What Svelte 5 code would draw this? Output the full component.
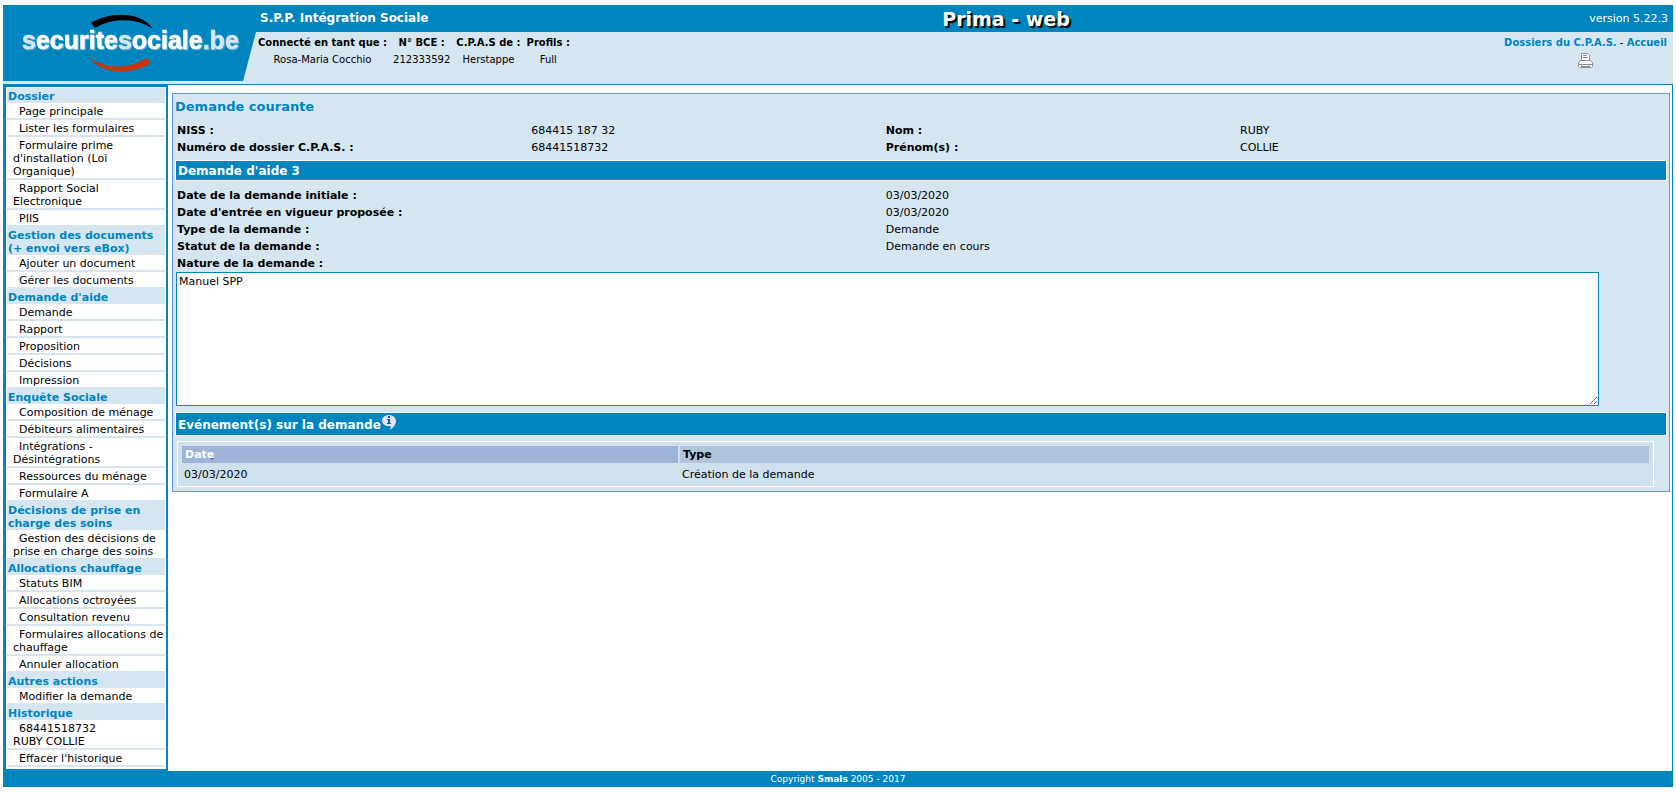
<script>
  const session = [
    { label: 'Connecté en tant que :', value: 'Rosa-Maria Cocchio' },
    { label: 'N° BCE :', value: '212333592' },
    { label: 'C.P.A.S de :', value: 'Herstappe' },
    { label: 'Profils :', value: 'Full' }
  ];

  const menu = [
    {
      title: 'Dossier',
      items: [
        'Page principale',
        'Lister les formulaires',
        "Formulaire prime d'installation (Loi Organique)",
        'Rapport Social Electronique',
        'PIIS'
      ]
    },
    { title: 'Gestion des documents (+ envoi vers eBox)', items: ['Ajouter un document', 'Gérer les documents'] },
    { title: "Demande d'aide", items: ['Demande', 'Rapport', 'Proposition', 'Décisions', 'Impression'] },
    {
      title: 'Enquête Sociale',
      items: [
        'Composition de ménage',
        'Débiteurs alimentaires',
        'Intégrations - Désintégrations',
        'Ressources du ménage',
        'Formulaire A'
      ]
    },
    { title: 'Décisions de prise en charge des soins', items: ['Gestion des décisions de prise en charge des soins'] },
    {
      title: 'Allocations chauffage',
      items: [
        'Statuts BIM',
        'Allocations octroyées',
        'Consultation revenu',
        'Formulaires allocations de chauffage',
        'Annuler allocation'
      ]
    },
    { title: 'Autres actions', items: ['Modifier la demande'] },
    { title: 'Historique', items: ['68441518732\nRUBY COLLIE', "Effacer l'historique"] }
  ];

  const person = [
    ['NISS :', '684415 187 32'],
    ['Nom :', 'RUBY'],
    ['Numéro de dossier C.P.A.S. :', '68441518732'],
    ['Prénom(s) :', 'COLLIE']
  ];

  const request = [
    ['Date de la demande initiale :', '03/03/2020'],
    ["Date d'entrée en vigueur proposée :", '03/03/2020'],
    ['Type de la demande :', 'Demande'],
    ['Statut de la demande :', 'Demande en cours']
  ];

  const events = [{ date: '03/03/2020', type: 'Création de la demande' }];

  let nature = 'Manuel SPP';
</script>

<div class="page">
  <header>
    <svg class="logo" viewBox="0 0 253 79" role="img" aria-label="securitesociale.be">
      <path fill="#0085be" d="M0 0H253V27L240 76H0z" />
      <path fill="#000" d="M88 18C105 7 137 5 150 24C135 13 110 12 92 23z" />
      <path fill="#cc3300" d="M86 52C100 64 126 65 143 53L148 58C129 70 98 70 86 52z" />
      <text class="logo-text" x="19" y="44"><tspan class="pale">s</tspan>ecurite<tspan class="pale">s</tspan>ociale<tspan class="pale">.be</tspan></text>
    </svg>
    <div class="banner">
      <div class="topbar">
        <span class="service">S.P.P. Intégration Sociale</span>
        <span class="app-name">Prima - web</span>
        <span class="version">version 5.22.3</span>
      </div>
      <div class="subbar">
        <table class="session">
          <thead>
            <tr>
              {#each session as s}<th>{s.label}</th>{/each}
            </tr>
          </thead>
          <tbody>
            <tr>
              {#each session as s}<td>{s.value}</td>{/each}
            </tr>
          </tbody>
        </table>
        <nav class="shortcuts">
          <div><a href="#dossiers">Dossiers du C.P.A.S.</a> - <a href="#accueil">Accueil</a></div>
          <button class="print" aria-label="Imprimer">
            <svg width="16" height="16" viewBox="0 0 16 16" fill="#fff" stroke="#8c8c8c">
              <path d="M2.5 7.5L3.5 6.5V.5H9.5L11.5 2.5V6.5L12.5 7.5z" />
              <path d="M5 2.5H9M5 4.5H10" />
              <path d="M2.5 7.5H12.5L14.5 9.5V13.500L13.5 14.5H1.5L.5 13.500V9.500z" />
              <path d="M1 11.5H4.5M10.5 11.5H14M4.5 11.5L3.5 13.500H11.5L10.5 11.5z" />
            </svg>
          </button>
        </nav>
      </div>
    </div>
  </header>

  <div class="body">
    <nav class="sidebar">
      {#each menu as group}
        <h2>{group.title}</h2>
        <ul>
          {#each group.items as item}
            <li><a href="#menu">{item}</a></li>
          {/each}
        </ul>
      {/each}
    </nav>

    <main>
      <section class="panel">
        <h1>Demande courante</h1>
        <dl class="person">
          {#each person as [label, value]}
            <dt>{label}</dt>
            <dd>{value}</dd>
          {/each}
        </dl>

        <h3 class="bar">Demande d'aide 3</h3>
        <dl class="request">
          {#each request as [label, value]}
            <dt>{label}</dt>
            <dd>{value}</dd>
          {/each}
        </dl>
        <label for="nature">Nature de la demande :</label>
        <textarea id="nature" bind:value={nature}></textarea>

        <h3 class="bar events-bar">
          Evénement(s) sur la demande<svg class="info" width="14" height="15" viewBox="0 0 14 15">
            <path fill="#e4e6f8" d="M7 0C3 0 0 2.500 0 5.500S3 11 6 11C8 11 9 11 9 12C9 13 8 14 7 15C11 14 14 9 14 6S11 0 7 0z" />
            <path fill="#2454b4" d="M6 1H8V3H6zM5 4H8V8H9V9H5V8H6V5H5z" />
          </svg>
        </h3>
        <div class="events">
          <table>
            <thead>
              <tr>
                <th class="sorted"><span>Date</span></th>
                <th>Type</th>
              </tr>
            </thead>
            <tbody>
              {#each events as event}
                <tr>
                  <td>{event.date}</td>
                  <td>{event.type}</td>
                </tr>
              {/each}
            </tbody>
          </table>
        </div>
      </section>
    </main>
  </div>

  <footer>Copyright <b>Smals</b> 2005 - 2017</footer>
</div>

<style>
  :global(body) {
    background: #fff;
    color: #000;
    font: 11px/17px Verdana, 'DejaVu Sans', sans-serif;
  }

  .page {
    margin: 5px 3px 8px;
  }

  a {
    color: inherit;
    text-decoration: none;
  }

  h1,
  h2,
  h3,
  dl,
  dd,
  ul {
    margin: 0;
    padding: 0;
  }

  header {
    display: flex;
    background: #d5e6f1;
    border-bottom: 1px solid #0085be;
  }

  .logo {
    width: 253px;
    height: 79px;
    flex: none;
  }

  .logo-text {
    font: bold 25px 'Liberation Sans', Arial, sans-serif;
    fill: #fff;
    stroke: #fff;
    stroke-width: 0.6;
    filter: drop-shadow(1px 1px 0 #5aa9d2);
  }

  .pale {
    fill: #d5e6f1;
    stroke: #d5e6f1;
  }

  .banner {
    flex: 1;
  }

  .topbar {
    display: grid;
    grid-template-columns: 1fr auto 1fr;
    align-items: center;
    height: 27px;
    padding: 0 5px 0 4px;
    background: #0085be;
    color: #fff;
  }

  .service {
    font-size: 12px;
    font-weight: bold;
  }

  .app-name {
    padding-left: 84px;
    font: bold 19px/22px Verdana, 'DejaVu Sans', sans-serif;
    text-shadow: 2px 2px 1px #000;
  }

  .version {
    text-align: right;
  }

  .subbar {
    display: flex;
    justify-content: space-between;
    align-items: flex-start;
    padding: 2px 6px 0 0;
    font-size: 10px;
  }

  .session {
    border-spacing: 0;
    text-align: center;
  }

  .session th,
  .session td {
    padding: 0 4px 0 2px;
  }

  .shortcuts {
    padding-top: 2px;
    line-height: 14px;
    text-align: center;
  }

  .shortcuts a {
    color: #0085be;
    font-weight: bold;
  }

  .print {
    padding: 3px 2px 0;
    border: 0;
    background: none;
  }

  .print svg {
    display: block;
  }

  .body {
    display: flex;
    border-right: 1px solid #0085be;
  }

  .sidebar {
    box-sizing: border-box;
    width: 165px;
    flex: none;
    padding: 1px 1px 2px;
    border: solid #0085be;
    border-width: 2px 2px 2px 3px;
    line-height: 13px;
  }

  .sidebar h2 {
    padding: 2px 1px 0;
    background: #d5e6f1;
    color: #0085be;
    font-size: 11px;
    line-height: 13px;
  }

  .sidebar ul {
    list-style: none;
  }

  .sidebar li {
    padding: 2px 0 0 6px;
    border-bottom: 2px solid #d5e6f1;
    text-indent: 6px;
    white-space: pre-line;
  }

  .sidebar a {
    color: #000;
  }

  main {
    flex: 1;
    padding: 8px 2px 4px 4px;
  }

  .panel {
    padding: 4px 2px;
    border: 1px solid #6699cc;
    background: #d5e6f1;
  }

  h1 {
    color: #0085be;
    font-size: 13px;
    line-height: 17px;
  }

  dl {
    display: grid;
    width: 95%;
    padding-left: 2px;
  }

  .person {
    grid-template-columns: repeat(4, 1fr);
    margin: 7px 0 4px;
  }

  .request {
    grid-template-columns: repeat(2, 1fr);
    margin-top: 6px;
  }

  dt,
  label {
    font-weight: bold;
  }

  label {
    display: block;
    padding-left: 2px;
  }

  .bar {
    padding: 2px 2px 0;
    border: 1px solid #fff;
    background: #0085be;
    color: #fff;
    font-size: 12px;
    line-height: 17px;
  }

  textarea {
    display: block;
    box-sizing: border-box;
    width: calc(100% - 69px);
    height: 134px;
    margin: 0 0 6px 1px;
    padding: 2px;
    border: 1px solid #0085be;
    font: inherit;
    line-height: 13px;
  }

  .events-bar {
    line-height: 20px;
  }

  .info {
    margin-left: 1px;
    vertical-align: -1px;
  }

  .events {
    width: 99%;
    box-sizing: border-box;
    margin: 5px 0 0 2px;
    padding: 4px 4px 3px;
    border: 1px solid #fff;
    background: #cfe0ee;
  }

  .events table {
    width: 100%;
    border-spacing: 0;
    table-layout: fixed;
  }

  .events th {
    padding: 1px 3px 0;
    background: #b0c4de;
    line-height: 16px;
    text-align: left;
  }

  .events .sorted {
    box-sizing: border-box;
    width: 498px;
    border-right: 2px solid #cfe0ee;
    background: #9db4d8;
    color: #fff;
  }

  .sorted span {
    position: relative;
  }

  .sorted span::after {
    content: '';
    position: absolute;
    right: 0;
    bottom: 1px;
    border: 2px solid transparent;
    border-top-color: #6b6b55;
    border-bottom: 0;
  }

  .events td {
    padding: 3px 2px 0;
  }

  footer {
    background: #0085be;
    color: #fff;
    font-size: 9px;
    line-height: 16px;
    text-align: center;
  }
</style>
